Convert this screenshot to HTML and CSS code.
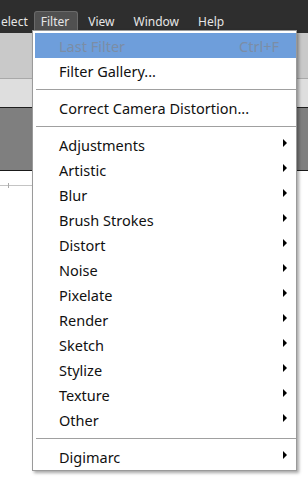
FILE: index.html
```html
<!DOCTYPE html>
<html lang="en">

<head>
    <meta charset="UTF-8">
    <meta name="viewport" content="width=device-width, initial-scale=1.0">
    <link rel="stylesheet" href="styles.css">
    <title>Filter menu</title>
</head>

<body>
    <div class="app">
        <nav class="menubar">
            <span class="menubar-item cut">elect</span>
            <span class="menubar-item open">Filter</span>
            <span class="menubar-item">View</span>
            <span class="menubar-item">Window</span>
            <span class="menubar-item">Help</span>
        </nav>
        <div class="options-bar"></div>
        <div class="tabs-bar"></div>
        <div class="panel-bar"></div>
        <div class="canvas">
            <div class="ruler"><span class="tick"></span></div>
        </div>

        <ul class="dropdown">
            <li class="item active disabled"><span>Last Filter</span><span class="shortcut">Ctrl+F</span></li>
            <li class="item"><span>Filter Gallery...</span></li>
            <li class="separator"></li>
            <li class="item"><span>Correct Camera Distortion...</span></li>
            <li class="separator"></li>
            <li class="item sub"><span>Adjustments</span></li>
            <li class="item sub"><span>Artistic</span></li>
            <li class="item sub"><span>Blur</span></li>
            <li class="item sub"><span>Brush Strokes</span></li>
            <li class="item sub"><span>Distort</span></li>
            <li class="item sub"><span>Noise</span></li>
            <li class="item sub"><span>Pixelate</span></li>
            <li class="item sub"><span>Render</span></li>
            <li class="item sub"><span>Sketch</span></li>
            <li class="item sub"><span>Stylize</span></li>
            <li class="item sub"><span>Texture</span></li>
            <li class="item sub"><span>Other</span></li>
            <li class="separator"></li>
            <li class="item sub"><span>Digimarc</span></li>
        </ul>
    </div>
</body>

</html>
```

FILE: styles.css
```css
body {
    margin: 0;
    padding: 0;
    font-family: 'Noto Sans', 'Open Sans', sans-serif;
    background: #fff;
}

.app {
    position: relative;
    width: 308px;
    height: 480px;
    overflow: hidden;
    display: flex;
    flex-direction: column;
}

.menubar {
    height: 33px;
    background: #2e2e2e;
    display: flex;
    align-items: flex-end;
    box-sizing: border-box;
    padding-bottom: 2px;
}

.menubar-item {
    color: #e6e6e6;
    font-size: 12px;
    line-height: 19px;
    padding: 0 8px 0 9px;
    border: 1px solid transparent;
    border-bottom: none;
    border-radius: 3px 3px 0 0;
}

.menubar-item.cut {
    padding-left: 0;
    padding-right: 0;
    margin-right: 5px;
}

.menubar-item.open {
    background: #505050;
    border-color: #6a6a6a;
    padding: 0 8px 0 6px;
}

.options-bar {
    height: 45px;
    background: #c9c9c9;
    border-bottom: 1px solid #a9a9a9;
}

.tabs-bar {
    height: 28px;
    background: #dedede;
    border-bottom: 1px solid #1e1e1e;
}

.panel-bar {
    height: 62px;
    background: #7f7f7f;
    border-bottom: 1px solid #1a1a1a;
}

.canvas {
    flex: 1;
    background: #fff;
}

.ruler {
    position: relative;
    width: 34px;
    margin-top: 14px;
    border-top: 1px solid #c4c4c4;
}

.tick {
    position: absolute;
    left: 8px;
    top: -3px;
    width: 1px;
    height: 5px;
    background: #aaa;
}

.dropdown {
    position: absolute;
    left: 32px;
    top: 30px;
    width: 261px;
    margin: 0;
    padding: 2px 0 1px 2px;
    list-style: none;
    background: #fff;
    border: 1px solid #9a9a9a;
    box-shadow: 2px 2px 3px rgba(0, 0, 0, 0.35);
}

.item {
    height: 25px;
    display: flex;
    align-items: center;
    justify-content: space-between;
    padding: 0 17px 0 24px;
    font-size: 14.5px;
    color: #111;
    position: relative;
}

.item.active {
    background: #6e9edb;
}

.item.disabled {
    color: #7b8da6;
}

.item.sub::after {
    content: "";
    position: absolute;
    right: 9px;
    top: 7px;
    border-left: 4px solid #000;
    border-top: 4px solid transparent;
    border-bottom: 4px solid transparent;
}

.separator {
    height: 1px;
    background: #a0a0a0;
    margin: 6px 0 5px 1px;
}
```
